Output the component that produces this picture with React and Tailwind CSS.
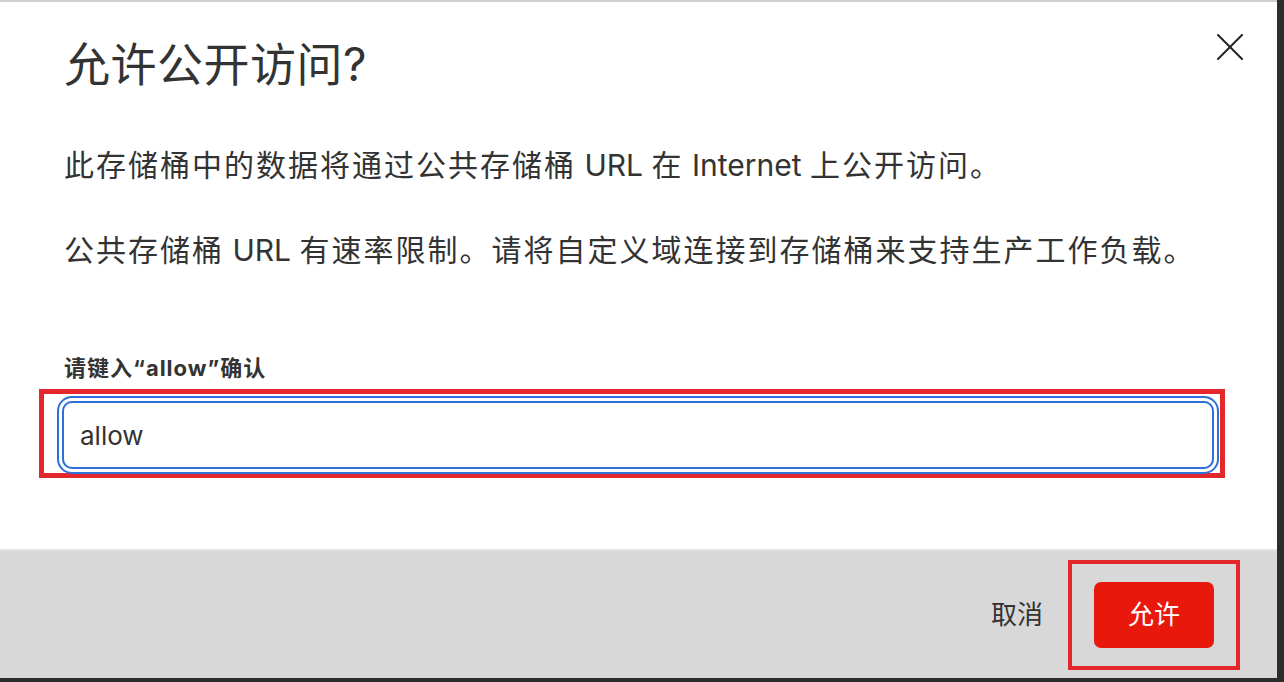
export default function App() {
  const font = { fontFamily: 'Inter, "Noto Sans CJK SC", sans-serif' };

  return (
    <div className="w-[1284px] h-[682px] bg-[#2d2d2d] overflow-hidden" style={font}>
      <div className="w-[1277px] h-[678px] flex flex-col bg-white border-t-2 border-[#cfcfcf]">
        {/* Body */}
        <div className="relative flex-1 flex flex-col pl-[64px] pt-[34px]">
          <button className="absolute top-[31px] right-[33px] w-[28px] h-[28px] flex items-center justify-center text-[#222]">
            <svg width="26" height="26" viewBox="0 0 26 26" fill="none" stroke="currentColor" strokeWidth="2" strokeLinecap="round">
              <path d="M1 1 L25 25" />
              <path d="M25 1 L1 25" />
            </svg>
          </button>

          <h2 className="text-[46px] leading-[56px] text-[#333] font-normal tracking-[0.5px]">允许公开访问?</h2>

          <p className="mt-[53px] text-[30px] leading-[40px] text-[#333] tracking-[2px]">
            此存储桶中的数据将通过公共存储桶<span className="tracking-normal"> URL </span>在<span className="tracking-normal"> Internet </span>上公开访问。
          </p>
          <p className="mt-[45px] text-[30px] leading-[40px] text-[#333] tracking-[2px]">
            公共存储桶<span className="tracking-normal"> URL </span>有速率限制。请将自定义域连接到存储桶来支持生产工作负载。
          </p>

          <label className="mt-[84px] text-[22px] leading-[28px] font-bold text-[#333] tracking-[1px]">请键入“allow”确认</label>

          <div className="mt-[7px] ml-[-25px] w-[1186px] h-[89px] border-[5px] border-[#e3272d]">
            <div className="ml-[18px] mt-[7px] w-[1152px] h-[68px] rounded-[10px] border-2 border-[#2f6fd8] shadow-[0_0_0_3px_#ffffff,0_0_0_5px_#2f6fd8] flex items-center px-4">
              <span className="text-[26px] text-[#333]">allow</span>
            </div>
          </div>
        </div>

        {/* Footer */}
        <div className="h-[129px] bg-[#d8d8d8] border-t-2 border-[#e4e4e4] flex items-center justify-end pr-[37px]">
          <button className="text-[26px] leading-[34px] text-[#333] mr-[25px]">取消</button>
          <div className="w-[172px] h-[110px] border-4 border-[#e3272d] flex items-center justify-center">
            <button className="w-[120px] h-[66px] rounded-[7px] bg-[#e8190c] text-white text-[26px] leading-[34px]">允许</button>
          </div>
        </div>
      </div>
    </div>
  );
}
